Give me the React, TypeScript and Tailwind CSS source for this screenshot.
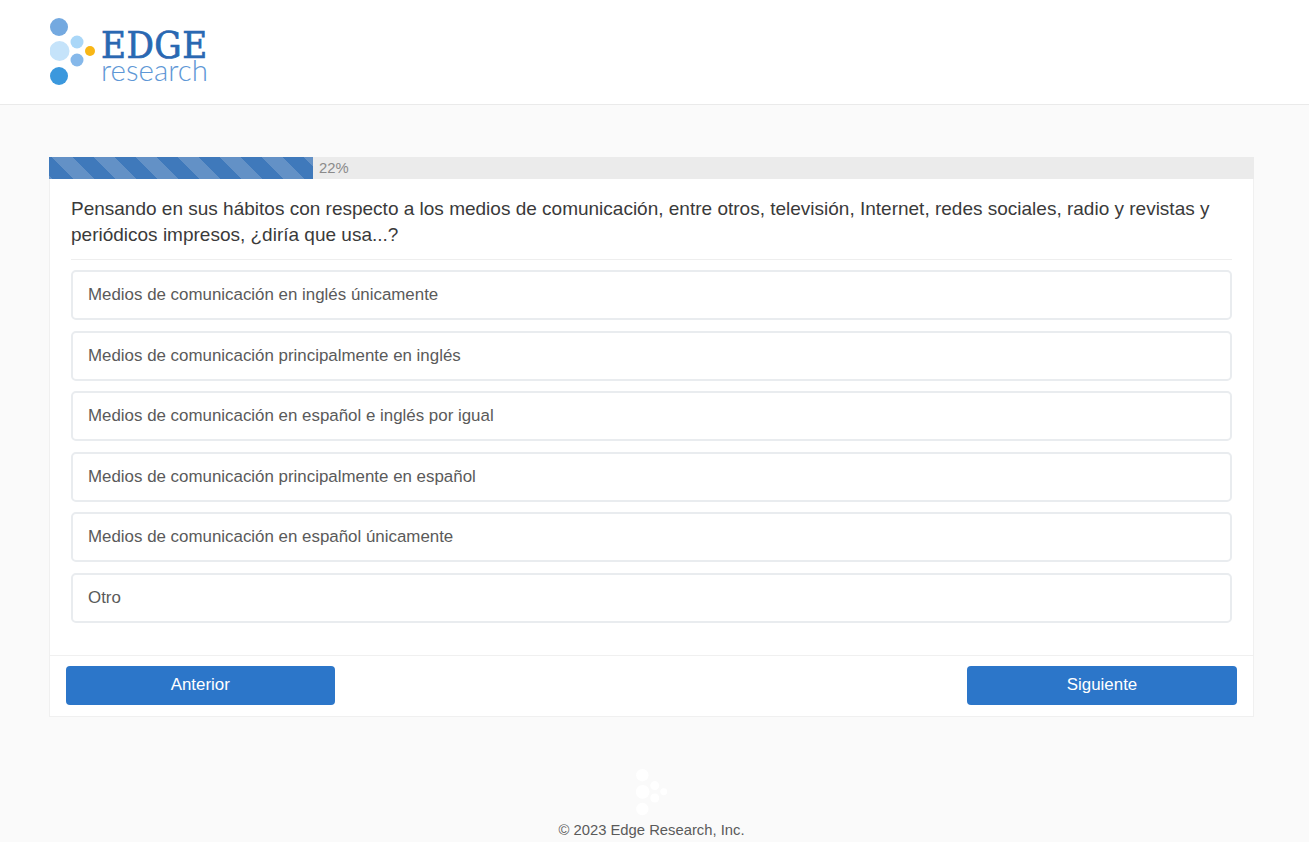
const options = [
  "Medios de comunicación en inglés únicamente",
  "Medios de comunicación principalmente en inglés",
  "Medios de comunicación en español e inglés por igual",
  "Medios de comunicación principalmente en español",
  "Medios de comunicación en español únicamente",
  "Otro",
];

function LogoDots({ colors, className }: { colors: string[]; className: string }) {
  return (
    <svg viewBox="0 0 46 68" className={className}>
      <circle cx="9" cy="9" r="9" fill={colors[0]} />
      <circle cx="9.5" cy="33" r="10" fill={colors[1]} />
      <circle cx="9" cy="58" r="9" fill={colors[2]} />
      <circle cx="27" cy="24" r="6.5" fill={colors[3]} />
      <circle cx="27" cy="42" r="6.5" fill={colors[4]} />
      <circle cx="40" cy="33" r="5" fill={colors[5]} />
    </svg>
  );
}

export default function App() {
  return (
    <div className="min-h-[842px] bg-[#fafafa] font-['Liberation_Sans',Arial,sans-serif]">
      <header className="h-[105px] border-b border-[#eaeaea] bg-white pl-[50px] pt-[18px]">
        <div className="flex items-start">
          <LogoDots
            className="h-[68px] w-[46px] shrink-0"
            colors={["#74a9e0", "#c5e3fa", "#3b98dd", "#aad7f8", "#85b8ea", "#f8b616"]}
          />
          <div className="ml-[5px] pt-[13px]">
            <div className="font-['DejaVu_Serif_Condensed','DejaVu_Serif',serif] text-[38px] leading-[28px] tracking-[0.5px] text-[#2a68b2] [-webkit-text-stroke:0.7px_#2a68b2]">EDGE</div>
            <div className="font-['Lato',sans-serif] text-[29.5px] font-light leading-[21px] text-[#5e97d6]">research</div>
          </div>
        </div>
      </header>

      <main className="pl-[49px] pr-[55px] pt-[52px]">
        <div className="border-x border-b border-[#f0f0f0] bg-white">
          <div className="-mx-px flex h-[22px] bg-[#ebebeb] text-[14.8px] leading-[22px] text-[#8a8a8a]">
            <div className="h-full w-[264px] bg-[repeating-linear-gradient(45deg,#6391c6_0,#6391c6_2.8px,#3f79bb_2.8px,#3f79bb_17.6px,#6391c6_17.6px,#6391c6_29.7px)]" />
            <span className="ml-[6px]">22%</span>
          </div>

          <div className="px-[21px] pt-[17px]">
            <h1 className="border-b border-[#eeeeee] pb-[11px] text-[19px] leading-[26px] font-normal text-[#3a3a3a]">
              Pensando en sus hábitos con respecto a los medios de comunicación, entre otros, televisión, Internet, redes sociales, radio y revistas y periódicos impresos, ¿diría que usa...?
            </h1>
            <ul className="flex flex-col gap-[10.5px] pt-[10px] pb-[32.5px]">
              {options.map((option) => (
                <li
                  key={option}
                  className="flex h-[50px] items-center rounded-[5px] border-2 border-[#e9ecef] px-[15px] text-[16.9px] text-[#5a5a5a]"
                >
                  {option}
                </li>
              ))}
            </ul>
          </div>

          <div className="flex justify-between border-t border-[#f0f0f0] px-[16px] pt-[10px] pb-[11px]">
            <button className="h-[39px] w-[268.5px] rounded-[4px] bg-[#2c76c9] pb-[1px] text-[16.9px] text-white">Anterior</button>
            <button className="h-[39px] w-[270px] rounded-[4px] bg-[#2c76c9] pb-[1px] text-[16.9px] text-white">Siguiente</button>
          </div>
        </div>
      </main>

      <footer className="flex flex-col items-center pl-[49px] pr-[55px] pt-[52px] text-[14.8px] leading-[20px] text-[#5a5a5a]">
        <LogoDots
          className="h-[47px] w-[32px]"
          colors={["#ffffff", "#ffffff", "#ffffff", "#ffffff", "#ffffff", "#ffffff"]}
        />
        <p className="mt-[4px]">© 2023 Edge Research, Inc.</p>
      </footer>
    </div>
  );
}
